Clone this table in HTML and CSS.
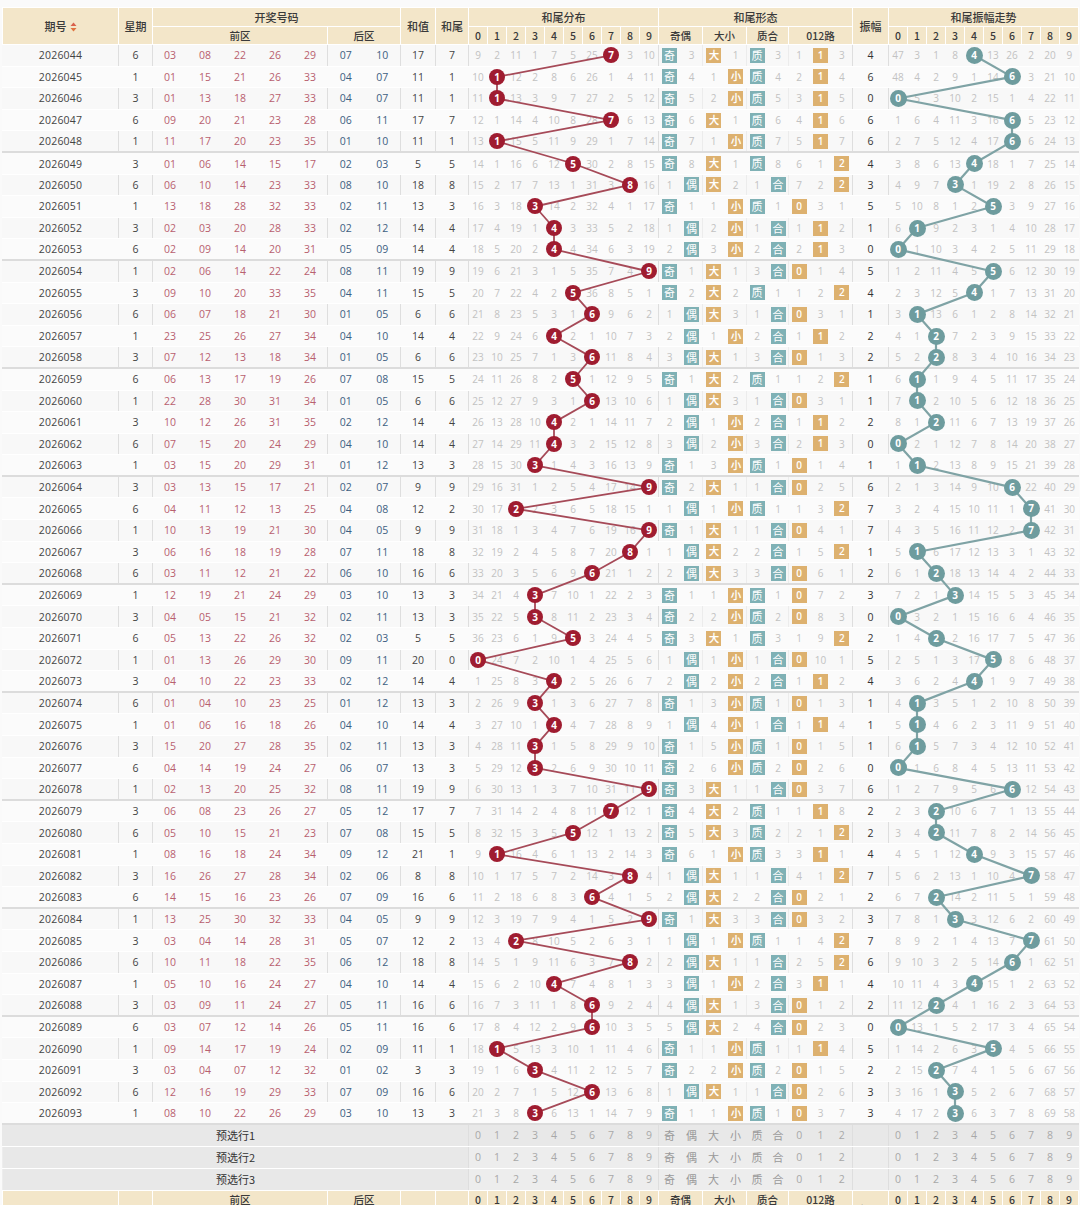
FILE: index.html
```html
<!DOCTYPE html>
<html lang="zh-CN">
<head>
<meta charset="utf-8">
<title>和尾走势</title>
<link rel="stylesheet" href="styles.css">
</head>
<body>
<div class="wrap" id="wrap">
<table class="chart">
<colgroup>
<col class="c-qh"><col class="c-xq">
<col class="c-f"><col class="c-f"><col class="c-f"><col class="c-f"><col class="c-f">
<col class="c-b"><col class="c-b">
<col class="c-hz"><col class="c-hw">
<col class="c-d"><col class="c-d"><col class="c-d"><col class="c-d"><col class="c-d"><col class="c-d"><col class="c-d"><col class="c-d"><col class="c-d"><col class="c-d">
<col class="c-x2"><col class="c-x2"><col class="c-x2"><col class="c-x2"><col class="c-x3"><col class="c-x3">
<col class="c-x4"><col class="c-x4"><col class="c-x4">
<col class="c-zf">
<col class="c-d"><col class="c-d"><col class="c-d"><col class="c-d"><col class="c-d"><col class="c-d"><col class="c-d"><col class="c-d"><col class="c-d"><col class="c-d">
</colgroup>
<thead>
<tr class="h1">
<th rowspan="2">期号<svg class="sort" width="7" height="10" viewBox="0 0 7 10"><path d="M3.5 0.5 L6.5 4 L0.5 4 Z" fill="#d9614c"/><path d="M0.5 6 L6.5 6 L3.5 9.5 Z" fill="#e0733f"/></svg></th>
<th rowspan="2" class="sl">星期</th>
<th colspan="7" class="sl">开奖号码</th>
<th rowspan="2" class="sl">和值</th>
<th rowspan="2" class="sl">和尾</th>
<th colspan="10" class="sl">和尾分布</th>
<th colspan="9" class="sl">和尾形态</th>
<th rowspan="2" class="sl">振幅</th>
<th colspan="10" class="sl">和尾振幅走势</th>
</tr>
<tr class="h2">
<th colspan="5" class="sl">前区</th><th colspan="2" class="sl">后区</th>
<th class="sl">0</th><th>1</th><th>2</th><th>3</th><th>4</th><th>5</th><th>6</th><th>7</th><th>8</th><th>9</th>
<th colspan="2" class="sl">奇偶</th><th colspan="2" class="sl">大小</th><th colspan="2" class="sl">质合</th><th colspan="3" class="sl">012路</th>
<th class="sl">0</th><th>1</th><th>2</th><th>3</th><th>4</th><th>5</th><th>6</th><th>7</th><th>8</th><th>9</th>
</tr>
</thead>
<tbody id="body"></tbody>
<tbody id="pre"></tbody>
<tfoot>
<tr class="f1">
<th rowspan="2">期号</th>
<th rowspan="2" class="sl">星期</th>
<th colspan="5" class="sl">前区</th><th colspan="2" class="sl">后区</th>
<th rowspan="2" class="sl">和值</th>
<th rowspan="2" class="sl">和尾</th>
<th class="sl">0</th><th>1</th><th>2</th><th>3</th><th>4</th><th>5</th><th>6</th><th>7</th><th>8</th><th>9</th>
<th colspan="2" class="sl">奇偶</th><th colspan="2" class="sl">大小</th><th colspan="2" class="sl">质合</th><th colspan="3" class="sl">012路</th>
<th rowspan="2" class="sl">振幅</th>
<th class="sl">0</th><th>1</th><th>2</th><th>3</th><th>4</th><th>5</th><th>6</th><th>7</th><th>8</th><th>9</th>
</tr>
<tr class="f2">
<th colspan="7" class="sl">开奖号码</th>
<th colspan="10" class="sl">和尾分布</th>
<th colspan="9" class="sl">和尾形态</th>
<th colspan="10" class="sl">和尾振幅走势</th>
</tr>
</tfoot>
</table>
<svg class="lines" id="lines" xmlns="http://www.w3.org/2000/svg"></svg>
</div>
<script src="script.js"></script>
</body>
</html>
```

FILE: styles.css
```css
html, body {
  margin: 0;
  padding: 0;
  background: #fafafa;
}
body {
  font-family: "Open Sans", "Noto Sans CJK SC", sans-serif;
  color: #333;
  width: 1080px;
  height: 1205px;
  overflow: hidden;
}
.wrap {
  position: relative;
  z-index: 0;
  margin: 7px 0 0 2px;
  width: 1076px;
}
.chart {
  width: 1076px;
  table-layout: fixed;
  border-collapse: collapse;
  font-size: 10.5px;
}
.c-qh { width: 116px; }
.c-xq { width: 34px; }
.c-f { width: 35px; }
.c-b { width: 36.5px; }
.c-hz { width: 35px; }
.c-hw { width: 33px; }
.c-d { width: 19px; }
.c-x2 { width: 22px; }
.c-x3 { width: 21px; }
.c-x4 { width: 21.33px; }
.c-zf { width: 36px; }

th {
  background: #f3e6c9;
  font-weight: 500;
  color: #3a3a3a;
  font-size: 11px;
  border: 1px solid #fff;
  padding: 0;
  text-align: center;
  vertical-align: middle;
  white-space: nowrap;
  overflow: hidden;
  font-family: "Noto Sans CJK SC", "Open Sans", sans-serif;
}
.h1 th { height: 18px; }
.h2 th { height: 17px; }
.h2 th, .f1 th { font-size: 10.5px; }
.sort { margin-left: 3px; vertical-align: -1px; }

td {
  background: #f8f8f8;
  border-top: 1px solid #fff;
  border-bottom: 1px solid #fff;
  border-left: 1px solid #f8f8f8;
  padding: 0;
  text-align: center;
  vertical-align: middle;
  white-space: nowrap;
  line-height: 14px;
}
tr.d { height: 21.6px; }
tr.d:nth-child(even) td { background: #fbfbfb; border-left-color: #fbfbfb; }
tr.gend td { border-bottom: 2px solid #dcdcdc; }
td.sl { border-left: 1px solid #dedede; }
td.sx { border-left: 1px solid #ececec; }

.qh { color: #444; letter-spacing: 0.2px; }
.xq { color: #444; }
.fr { color: #b8606f; }
.bk { color: #3e5f82; }
.hz { color: #444; }
.zf { color: #333; }
.ms { color: #c2c2c2; font-size: 10px; }

.ball {
  position: relative;
  z-index: 2;
  display: inline-block;
  border-radius: 50%;
  color: #fff;
  font-weight: 700;
  text-align: center;
}
.ball.r {
  width: 16px;
  height: 16px;
  line-height: 16px;
  font-size: 10px;
  background: #9f1c30;
}
.ball.t {
  width: 17px;
  height: 17px;
  line-height: 17px;
  font-size: 10px;
  background: #6e9c9e;
}
.blk {
  display: inline-block;
  width: 15px;
  height: 15px;
  line-height: 15px;
  font-size: 11px;
  color: #fff;
  font-family: "Noto Sans CJK SC", sans-serif;
}
.blk.tl { background: #7fb1b5; }
.blk.tn { background: #ddb16f; font-family: "Open Sans", sans-serif; font-weight: 600; font-size: 10px; }

tr.p { height: 22px; }
tr.p td {
  background: #ededed;
  color: #a8a8a8;
  border-top: 1px solid #fff;
  border-bottom: 1px solid #fff;
  border-left-color: #ededed;
}
tr.p:first-child td { background: #e8e8e8; border-left-color: #e8e8e8; }
tr.p td.lab {
  background: #e8e8e8;
  color: #333;
  font-size: 11px;
  font-family: "Noto Sans CJK SC", sans-serif;
}
tr.p td.cn { font-family: "Noto Sans CJK SC", sans-serif; font-size: 11px; color: #9a9a9a; }
tr.p td.sl { border-left: 1px solid #dedede; }

.f1 th { height: 18px; }
.f2 th { height: 18px; }

.lines {
  position: absolute;
  left: 0;
  top: 0;
  width: 1076px;
  height: 1200px;
  z-index: 1;
  pointer-events: none;
  overflow: visible;
}
```

FILE: script.js
```js
(function () {
  var R = [
    ["2026044",6,"03 08 22 26 29","07 10"],
    ["2026045",1,"01 15 21 26 33","04 07"],
    ["2026046",3,"01 13 18 27 33","04 07"],
    ["2026047",6,"09 20 21 23 28","06 11"],
    ["2026048",1,"11 17 20 23 35","01 10"],
    ["2026049",3,"01 06 14 15 17","02 03"],
    ["2026050",6,"06 10 14 23 33","08 10"],
    ["2026051",1,"13 18 28 32 33","02 11"],
    ["2026052",3,"02 03 20 28 33","02 12"],
    ["2026053",6,"02 09 14 20 31","05 09"],
    ["2026054",1,"02 06 14 22 24","08 11"],
    ["2026055",3,"09 10 20 33 35","04 11"],
    ["2026056",6,"06 07 18 21 30","01 05"],
    ["2026057",1,"23 25 26 27 34","04 10"],
    ["2026058",3,"07 12 13 18 34","01 05"],
    ["2026059",6,"06 13 17 19 26","07 08"],
    ["2026060",1,"22 28 30 31 34","01 05"],
    ["2026061",3,"10 12 26 31 35","02 12"],
    ["2026062",6,"07 15 20 24 29","04 10"],
    ["2026063",1,"03 15 20 29 31","01 12"],
    ["2026064",3,"03 13 15 17 21","02 07"],
    ["2026065",6,"04 11 12 13 25","04 08"],
    ["2026066",1,"10 13 19 21 30","04 05"],
    ["2026067",3,"06 16 18 19 28","07 11"],
    ["2026068",6,"03 11 12 21 22","06 10"],
    ["2026069",1,"12 19 21 24 29","03 10"],
    ["2026070",3,"04 05 15 21 32","02 11"],
    ["2026071",6,"05 13 22 26 32","02 03"],
    ["2026072",1,"01 13 26 29 30","09 11"],
    ["2026073",3,"04 10 22 23 33","02 12"],
    ["2026074",6,"01 04 10 23 25","01 12"],
    ["2026075",1,"01 06 16 18 26","04 10"],
    ["2026076",3,"15 20 27 28 35","02 11"],
    ["2026077",6,"04 14 19 24 27","06 07"],
    ["2026078",1,"02 13 20 25 32","08 11"],
    ["2026079",3,"06 08 23 26 27","05 12"],
    ["2026080",6,"05 10 15 21 23","07 08"],
    ["2026081",1,"08 16 18 24 34","09 12"],
    ["2026082",3,"16 26 27 28 34","02 06"],
    ["2026083",6,"14 15 16 23 26","07 09"],
    ["2026084",1,"13 25 30 32 33","04 05"],
    ["2026085",3,"03 04 14 28 31","05 07"],
    ["2026086",6,"10 11 18 22 35","06 12"],
    ["2026087",1,"05 10 16 24 27","04 10"],
    ["2026088",3,"03 09 11 24 27","05 11"],
    ["2026089",6,"03 07 12 14 26","05 11"],
    ["2026090",1,"09 14 17 19 24","02 09"],
    ["2026091",3,"03 04 07 12 32","01 02"],
    ["2026092",6,"12 16 19 29 33","07 09"],
    ["2026093",1,"08 10 22 26 29","03 10"]
  ];

  var dist = [8,1,10,0,6,4,24,0,2,9];
  var oe = [0,2], bs = [0,0], pc = [0,2], m3 = [0,0,2];
  var amp = [46,2,0,7,0,12,25,1,19,8];
  var prev = 3;
  var prime = {1:1,2:1,3:1,5:1,7:1};

  function step(arr, hit) {
    for (var k = 0; k < arr.length; k++) arr[k] = (k === hit) ? 0 : arr[k] + 1;
  }
  function group(arr, hit, labels, cls, lead) {
    var s = "";
    for (var k = 0; k < arr.length; k++) {
      var c = k === 0 ? lead : "";
      if (k === hit) s += '<td class="' + c + '"><span class="blk ' + cls + '">' + labels[k] + '</span></td>';
      else s += '<td class="ms ' + c + '">' + arr[k] + '</td>';
    }
    return s;
  }

  var html = "";
  R.forEach(function (r, i) {
    var fr = r[2].split(" ");
    var bk = r[3].split(" ");
    var sum = parseInt(bk[0], 10) + parseInt(bk[1], 10);
    var t = sum % 10;
    var a = Math.abs(t - prev);
    prev = t;
    step(dist, t);
    step(oe, t % 2 === 1 ? 0 : 1);
    step(bs, t >= 5 ? 0 : 1);
    step(pc, prime[t] ? 0 : 1);
    step(m3, t % 3);
    step(amp, a);

    var cls = "d" + (i % 5 === 4 ? " gend" : "");
    var s = '<tr class="' + cls + '">';
    s += '<td class="qh">' + r[0] + '</td>';
    s += '<td class="xq sl">' + r[1] + '</td>';
    for (var k = 0; k < 5; k++) s += '<td class="fr' + (k === 0 ? " sl" : "") + '">' + fr[k] + '</td>';
    s += '<td class="bk sl">' + bk[0] + '</td><td class="bk">' + bk[1] + '</td>';
    s += '<td class="hz sl">' + sum + '</td>';
    s += '<td class="hz sl">' + t + '</td>';
    for (k = 0; k < 10; k++) {
      var sl = k === 0 ? " sl" : "";
      if (k === t) s += '<td class="' + sl + '"><span class="ball r">' + k + '</span></td>';
      else s += '<td class="ms' + sl + '">' + dist[k] + '</td>';
    }
    s += group(oe, t % 2 === 1 ? 0 : 1, ["奇","偶"], "tl", "sl");
    s += group(bs, t >= 5 ? 0 : 1, ["大","小"], "tn", "sx");
    s += group(pc, prime[t] ? 0 : 1, ["质","合"], "tl", "sx");
    s += group(m3, t % 3, ["0","1","2"], "tn", "sx");
    s += '<td class="zf sl">' + a + '</td>';
    for (k = 0; k < 10; k++) {
      var sl2 = k === 0 ? " sl" : "";
      if (k === a) s += '<td class="' + sl2 + '"><span class="ball t">' + k + '</span></td>';
      else s += '<td class="ms' + sl2 + '">' + amp[k] + '</td>';
    }
    s += '</tr>';
    html += s;
  });
  document.getElementById("body").innerHTML = html;

  var ph = "";
  for (var p = 1; p <= 3; p++) {
    var s2 = '<tr class="p"><td class="lab" colspan="11">预选行' + p + '</td>';
    for (var k2 = 0; k2 < 10; k2++) s2 += '<td' + (k2 === 0 ? ' class="sl"' : '') + '>' + k2 + '</td>';
    var cn = ["奇","偶","大","小","质","合"];
    for (k2 = 0; k2 < 6; k2++) s2 += '<td class="cn' + (k2 === 0 ? ' sl' : '') + '">' + cn[k2] + '</td>';
    s2 += '<td>0</td><td>1</td><td>2</td>';
    s2 += '<td class="sl"></td>';
    for (k2 = 0; k2 < 10; k2++) s2 += '<td' + (k2 === 0 ? ' class="sl"' : '') + '>' + k2 + '</td>';
    s2 += '</tr>';
    ph += s2;
  }
  document.getElementById("pre").innerHTML = ph;

  function draw() {
    var wrap = document.getElementById("wrap");
    var svg = document.getElementById("lines");
    var wr = wrap.getBoundingClientRect();
    function pts(sel) {
      var out = [];
      var list = wrap.querySelectorAll(sel);
      for (var i = 0; i < list.length; i++) {
        var b = list[i].getBoundingClientRect();
        out.push((b.left + b.width / 2 - wr.left).toFixed(1) + "," + (b.top + b.height / 2 - wr.top).toFixed(1));
      }
      return out.join(" ");
    }
    svg.innerHTML =
      '<polyline points="' + pts(".ball.r") + '" fill="none" stroke="#a64a58" stroke-width="1.8" stroke-linejoin="round"/>' +
      '<polyline points="' + pts(".ball.t") + '" fill="none" stroke="#7fa3a5" stroke-width="2.2" stroke-linejoin="round"/>';
  }
  draw();
  window.addEventListener("load", draw);
})();
```
